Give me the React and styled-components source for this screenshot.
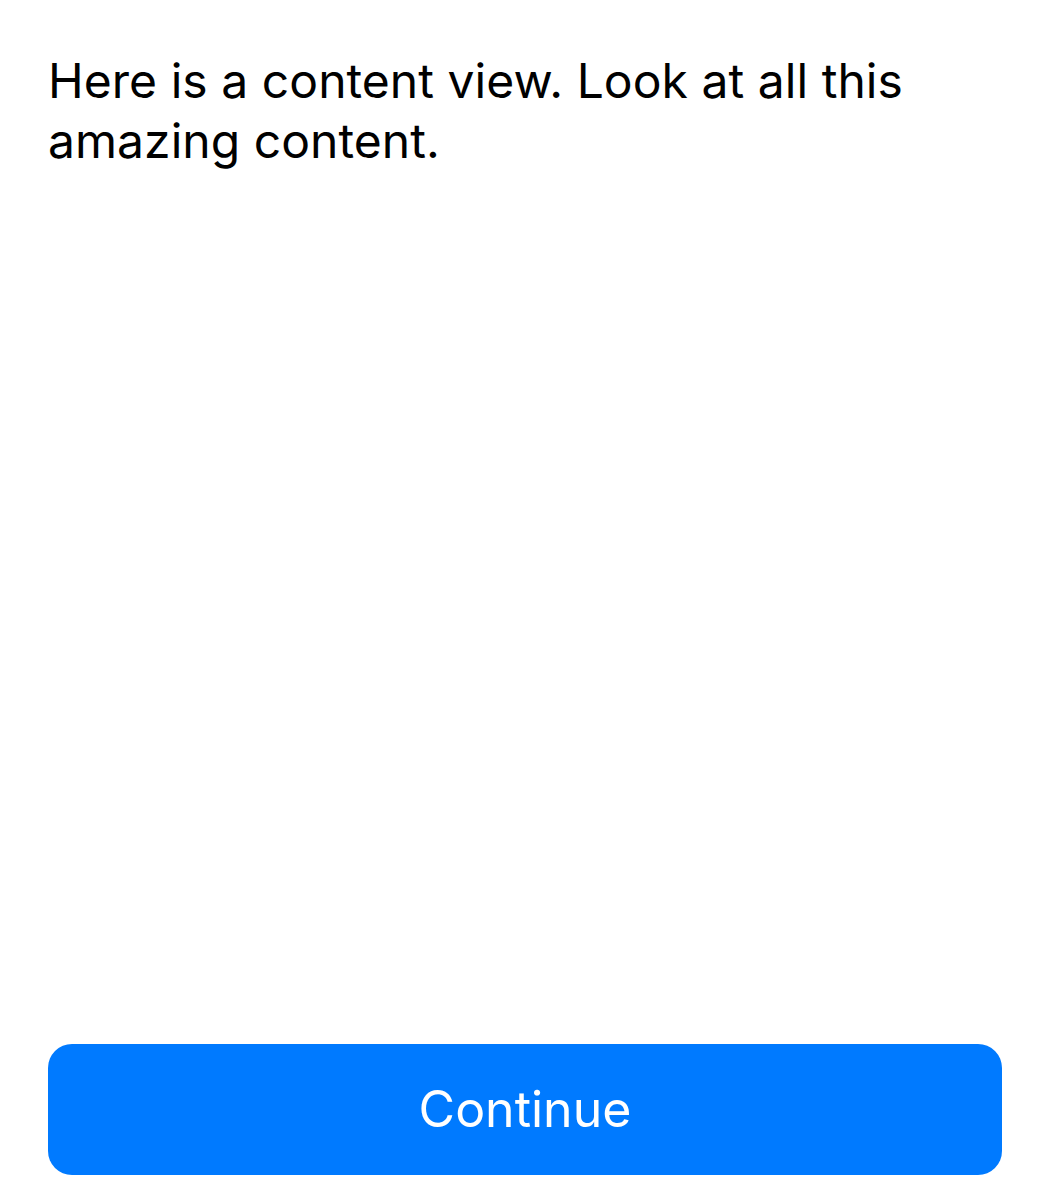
import styled, { createGlobalStyle } from 'styled-components'

const GlobalStyle = createGlobalStyle`
  html, body {
    margin: 0;
    padding: 0;
    background: #ffffff;
  }
`

const Screen = styled.div`
  box-sizing: border-box;
  height: 1200px;
  display: flex;
  flex-direction: column;
  justify-content: space-between;
  padding: 51px 48px 25px;
  font-family: Inter, "Noto Sans", sans-serif;
`

const Body = styled.p`
  margin: 0;
  font-size: 48px;
  line-height: 60px;
  color: #000000;
  letter-spacing: 0.05px;
`

const PrimaryButton = styled.button`
  height: 131px;
  width: 100%;
  border: none;
  border-radius: 24px;
  background: #007aff;
  color: #ffffff;
  font-family: inherit;
  font-size: 50px;
  font-weight: 400;
  padding: 0 0 2px;
  cursor: pointer;
`

const App = () => {
  return (
    <>
      <GlobalStyle />
      <Screen>
        <Body>Here is a content view. Look at all this amazing content.</Body>
        <PrimaryButton>Continue</PrimaryButton>
      </Screen>
    </>
  )
}

export default App
